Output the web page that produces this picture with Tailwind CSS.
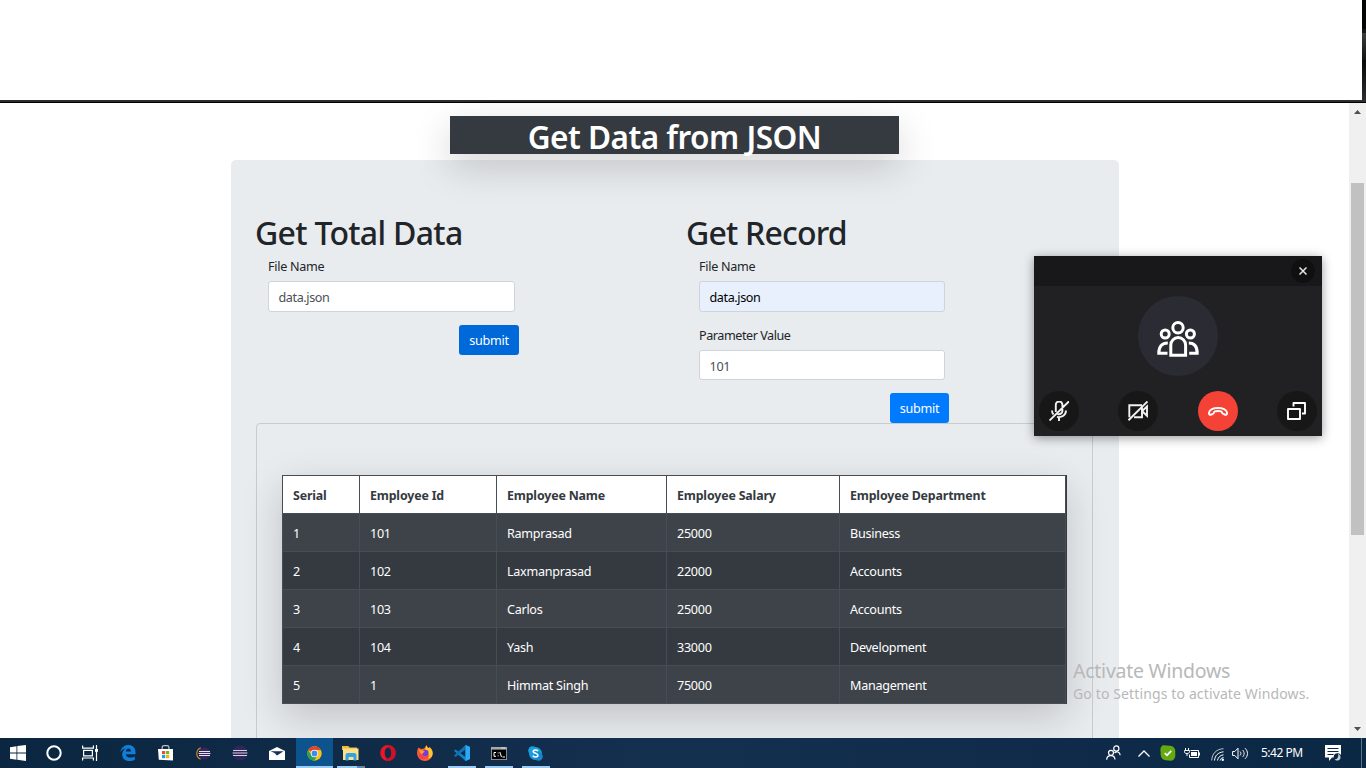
<!DOCTYPE html>
<html lang="en">
<head>
<meta charset="utf-8">
<title>Get Data from JSON</title>
<script src="https://cdn.jsdelivr.net/npm/@tailwindcss/browser@4"></script>
</head>
<body class="w-[1366px] h-[768px] overflow-hidden bg-white font-['Noto_Sans','Open_Sans',sans-serif] text-[12.6px] text-[#212529]">
<div class="relative w-[1366px] h-[768px] overflow-hidden flex flex-col">
  <!-- blank strip above the browser page -->
  <div class="flex h-[100px] shrink-0">
    <div class="flex-1 bg-white"></div>
    <div class="w-1 flex flex-col">
      <div class="h-[29px] bg-[#030404]"></div>
      <div class="h-1 bg-[#151616]"></div>
      <div class="h-[27px] bg-linear-to-b from-[#3c3e3e] to-[#121313]"></div>
      <div class="flex-1 bg-linear-to-b from-[#080909] to-[#2c2c2e]"></div>
    </div>
  </div>
  <div class="h-[3px] shrink-0 bg-[#2d2d2f] border-b border-black"></div>

  <div class="flex h-[635px] shrink-0">
    <main class="flex-1 h-[635px] overflow-hidden pt-[13px]">
      <h1 class="relative z-10 ml-[450px] w-[449px] h-[38px] bg-[#343a40] text-white text-center text-[31.5px] font-semibold leading-[41px] shadow-[0_13px_38px_rgba(0,0,0,0.175)]"><span class="inline-block tracking-[-0.5px] whitespace-nowrap">Get Data from JSON</span></h1>
      <section class="mt-1.5 ml-[231px] w-[888px] h-[620px] rounded-[5px] bg-[#e9ecef] px-[25px] pt-[51px]">
        <div class="flex h-[212px]">
          <div class="w-[431px]">
            <h2 class="-ml-px h-[44px] leading-[44px] text-[32px] font-medium whitespace-nowrap tracking-[-0.7px]">Get Total Data</h2>
            <div class="pl-3">
              <div class="h-[26px] pt-0.5 leading-[19px]"><span class="tracking-[-0.3px]">File Name</span></div>
              <div class="w-[247px] h-[31px] rounded-[3px] border border-[#ced4da] bg-white px-[9.5px] leading-[31px] text-[#495057]"><span class="tracking-[-0.4px]">data.json</span></div>
              <div class="mt-[13px] ml-[191px] w-[60px] h-[30px] rounded-[3px] bg-[#0069d9] text-white text-center leading-[31px] tracking-[-0.3px]">submit</div>
            </div>
          </div>
          <div class="flex-1">
            <h2 class="-ml-px h-[44px] leading-[44px] text-[32px] font-medium whitespace-nowrap tracking-[-0.8px]">Get Record</h2>
            <div class="pl-3">
              <div class="h-[26px] pt-0.5 leading-[19px]"><span class="tracking-[-0.3px]">File Name</span></div>
              <div class="w-[246px] h-[31px] rounded-[3px] border border-[#ced4da] bg-[#e8f0fe] px-[9.5px] leading-[31px] text-black"><span class="tracking-[-0.4px]">data.json</span></div>
              <div class="mt-[13px] h-[25px] pt-px leading-[19px] tracking-[-0.45px]">Parameter Value</div>
              <div class="w-[246px] h-[30px] rounded-[3px] border border-[#ced4da] bg-white px-[9.5px] leading-[31px] text-[#495057]"><span class="tracking-[-0.3px]">101</span></div>
              <div class="mt-[13px] ml-[191px] w-[59px] h-[30px] rounded-[3px] bg-[#007bff] text-white text-center leading-[32px] tracking-[-0.3px]">submit</div>
            </div>
          </div>
        </div>
        <div class="w-[837px] h-[400px] rounded-[4px] border border-[#c9cccf] pt-[51px] pl-[25px]">
          <div class="w-[785px] h-[229px] bg-[#343a40] shadow-[0_13px_38px_rgba(0,0,0,0.175)]">
            <table class="w-[784px] table-fixed border-collapse text-white tracking-[-0.28px]">
              <colgroup><col class="w-[77px]"><col class="w-[137px]"><col class="w-[170px]"><col class="w-[173px]"><col class="w-[226px]"></colgroup>
              <thead>
                <tr class="h-[38px] bg-white text-[#343a40] text-left font-bold text-[12.4px] tracking-[-0.16px]">
                  <th class="border border-[#454d55] px-2.5 py-0 pt-[3px] leading-[18px]">Serial</th><th class="border border-[#454d55] px-2.5 py-0 pt-[3px] leading-[18px]">Employee Id</th><th class="border border-[#454d55] px-2.5 py-0 pt-[3px] leading-[18px]">Employee Name</th><th class="border border-[#454d55] px-2.5 py-0 pt-[3px] leading-[18px]">Employee Salary</th><th class="border border-[#454d55] px-2.5 py-0 pt-[3px] leading-[18px]">Employee Department</th>
                </tr>
              </thead>
              <tbody class="[&_td]:border [&_td]:border-[#454d55] [&_td]:px-2.5 [&_td]:py-0 [&_td]:pt-[3px] [&_td]:leading-[18px]">
                <tr class="h-[38px] bg-[#3e4349]"><td>1</td><td>101</td><td>Ramprasad</td><td>25000</td><td>Business</td></tr>
                <tr class="h-[38px] bg-[#343a40]"><td>2</td><td>102</td><td>Laxmanprasad</td><td>22000</td><td>Accounts</td></tr>
                <tr class="h-[38px] bg-[#3e4349]"><td>3</td><td>103</td><td>Carlos</td><td>25000</td><td>Accounts</td></tr>
                <tr class="h-[38px] bg-[#343a40]"><td>4</td><td>104</td><td>Yash</td><td>33000</td><td>Development</td></tr>
                <tr class="h-[38px] bg-[#3e4349]"><td>5</td><td>1</td><td>Himmat Singh</td><td>75000</td><td>Management</td></tr>
              </tbody>
            </table>
          </div>
        </div>
      </section>
    </main>
    <!-- scrollbar -->
    <div class="w-[17px] bg-[#f0f0f0] flex flex-col items-center pt-[7px] pb-[7px]">
      <svg class="w-[7px] h-[4px] shrink-0" viewBox="0 0 7 4"><path d="M3.5 0 7 4H0z" fill="#505050"/></svg>
      <div class="mt-[69px] w-[13px] h-[352px] bg-[#c1c1c1]"></div>
      <svg class="mt-auto w-[7px] h-[4px] shrink-0" viewBox="0 0 7 4"><path d="M3.5 4 7 0H0z" fill="#505050"/></svg>
    </div>
  </div>

  <!-- taskbar -->
  <footer class="h-[30px] shrink-0 bg-linear-to-r from-[#0a2640] via-[#14304f] to-[#0a2744] flex text-white">
    <div class="flex w-[555px] [&>div]:w-[37px] [&>div]:h-[30px] [&>div]:flex [&>div]:items-center [&>div]:justify-center [&>div]:shrink-0">
      <div class="pr-0.5"><svg class="w-4 h-4" viewBox="0 0 16 16" fill="#fff"><path d="M0 2.2 6.5 1.200V7.500H0zM7.300 1.100 16 0v7.500H7.300zM0 8.400h6.500v6.300L0 13.800zM7.300 8.400H16V16l-8.700-1.200z"/></svg></div>
      <div class="pr-1"><svg class="w-4 h-4" viewBox="0 0 16 16" fill="none" stroke="#fff" stroke-width="2"><circle cx="8" cy="8" r="6.700"/></svg></div>
      <div class="pr-1"><svg class="w-[17px] h-4" viewBox="0 0 17 16" fill="none" stroke="#fff" stroke-width="1.200"><path d="M.6.500v2.600h10.800V.5M.6 15.500V13h10.800v2.500M1.600 5.300h8.800v5.500H1.600zM14.500 0v16"/><path d="M13 4h3v2.800h-3z" fill="#fff" stroke="none"/></svg></div>
      <div class="pr-1"><svg class="w-4 h-4" viewBox="0 0 16 16"><path d="M.3 7.300C1 2.600 4.500 0 8.500 0c4.400 0 7 3 7 7.200v2H5.700c.2 2.300 2.200 3.400 4.500 3.400 1.700 0 3.200-.4 4.600-1.200v3.300c-1.500.8-3.300 1.300-5.400 1.300-4.500 0-7.200-2.700-7.200-6.500 0-2.900 1.500-5.200 4-6.300C3.600 3.600 1.500 5 .3 7.300zm5.500-.8h5.100c0-1.900-.9-3-2.500-3S6 4.800 5.800 6.500z" fill="#0f7fdc"/></svg></div>
      <div class="pr-[3px]"><svg class="w-[15px] h-4" viewBox="0 0 15 16"><path d="M4.200 4V2.300C4.200.8 5.200.6 6 .6h3c1 0 1.900.3 1.900 1.700V4" fill="none" stroke="#b9c3cc" stroke-width="1.200"/><path d="M0 4h15v11.500L.8 14.800z" fill="#fff"/><path d="M4 6h3.200v3.200H4z" fill="#e8502c"/><path d="M8 6h3.200v3.200H8z" fill="#7ab51d"/><path d="M4 10h3.200v3.200H4z" fill="#189fe4"/><path d="M8 10h3.200v3.200H8z" fill="#f5b50d"/></svg></div>
      <div><svg class="w-[15px] h-[13px]" viewBox="0 0 15 13"><circle cx="8.500" cy="6.500" r="6" fill="#33275c"/><path d="M4.800.8C-.5 3-.5 10 4.600 12.200" fill="none" stroke="#e88a20" stroke-width="1.100"/><path d="M3 4.500h11M2.700 6.500h11.700M3 8.500h11" stroke="#e8e3f2" stroke-width="1.200"/></svg></div>
      <div class="pr-0.5"><svg class="w-4 h-4" viewBox="0 0 16 16"><circle cx="8" cy="8" r="7.500" fill="#31265a"/><path d="M1 5.500h14M.6 8h14.800M1 10.500h14" stroke="#d6d0e4" stroke-width="1.100"/></svg></div>
      <div class="pr-0.5"><svg class="w-4 h-[13px]" viewBox="0 0 16 13"><path d="M0 4 8 0l8 4v9H0z" fill="#fff"/><path d="M1.500 4.200h13L8 8.500 5.500 6.200 8 7z" fill="#12304e"/></svg></div>
      <div class="relative bg-[#0d548f]"><svg class="w-[15px] h-[15px]" viewBox="0 0 15 15"><circle cx="7.500" cy="7.500" r="7.200" fill="#fbc116"/><path d="M7.500 7.500 1.200 3.900A7.300 7.300 0 0 1 13.800 4H7.500z" fill="#e5432f"/><path d="M1.200 3.900A7.300 7.300 0 0 0 7.100 14.800l3.500-5.500L7.500 7.500 4.400 9.300z" fill="#2da04d"/><circle cx="7.500" cy="7.500" r="3.700" fill="#fff"/><circle cx="7.500" cy="7.500" r="2.900" fill="#4387f0"/></svg><i class="absolute left-0 bottom-0 w-full h-0.5 bg-[#9ccbf3]"></i></div>
      <div class="relative pr-0.5"><svg class="w-[17px] h-[15px]" viewBox="0 0 17 15"><path d="M0 0h6.500l1 1.500H15V4H0z" fill="#f0b93a"/><path d="M1 2.500h15.500V14H1z" fill="#ffe08a"/><path d="M3.500 14.500V8.600L5 7h8l1.500 1.600v5.900h-3V11H6.600v3.500z" fill="#2fa4e4"/></svg><i class="absolute left-1 bottom-0 w-[20px] h-0.5 bg-[#9ccbf3]"></i><i class="absolute left-6 bottom-0 w-[8px] h-0.5 bg-[#6688a5]"></i></div>
      <div class="pr-0.5"><svg class="w-4 h-4" viewBox="0 0 16 16"><path fill-rule="evenodd" d="M8 0a7.800 8 0 1 0 0 16A7.800 8 0 1 0 8 0zm0 2.600c2 0 3.300 2.400 3.300 5.400S10 13.400 8 13.400 4.700 11 4.700 8 6 2.600 8 2.600z" fill="#ed1629"/><path fill-rule="evenodd" d="M8 0c4.800 0 7.800 3.800 7.800 8S13 16 8 16c-1.500 0-2.500-1-2.500-3.500.7.600 1.600.9 2.500.9 2 0 3.300-2.400 3.300-5.400S10 2.600 8 2.600z" fill="#b80f22" opacity=".55"/></svg></div>
      <div class="pr-0.5"><svg class="w-4 h-4" viewBox="0 0 16 16"><path d="M1.500 2.500 4 4 7 3.500 9.500 0c.3 2 1.500 2.500 2.500 3.500L12.500 2C15 4 16 6.500 15.700 9c-.5 4-3.700 7-7.700 7S.3 13 .1 8.500C0 6.500.500 4 1.500 2.500z" fill="#fb642f"/><path d="M9.500 0c.3 2 1.500 2.500 2.500 3.500L12.500 2c3 3 4 6 2.300 9.500-2 2.500-4 1.500-4 1.500 2-4-.5-6-2.800-7.500z" fill="#ffc72d"/><circle cx="8.300" cy="8" r="3.300" fill="#7540cf"/><path d="M1.500 5C4 4.500 6 5 8 7c-2 0-1.500 2.300-4 2.500 2.500 3 6 2.500 8.500.5-1 4-7.500 6-10.500 2z" fill="#fd3d56"/><path d="M1.500 5C4 4.500 6 5 8 7c-2 0-1.800 2-4 2.200z" fill="#ff9b27"/></svg></div>
      <div class="relative pr-0.5"><svg class="w-4 h-4" viewBox="0 0 16 16"><path d="m11.500 0 4.500 2v12l-4.500 2L0 5.800 1.500 4.500l10 7.500z" fill="#0b84d0"/><path d="M11.500 0v4.500L1.500 12 0 10.600z" fill="#1471ae"/><path d="M11.500 0 16 2v12l-4.500 2z" fill="#2ba9f1"/></svg><i class="absolute left-1 bottom-0 w-[28px] h-0.5 bg-[#9ccbf3]"></i></div>
      <div class="relative pr-0.5"><svg class="w-4 h-[13px]" viewBox="0 0 16 13"><path d="M0 0h16v13H0z" fill="#a6aaae"/><path d="M.8 2.600h14.400v9.600H.8z" fill="#000"/><path d="M5 5.500H3v3.800h2M6.700 6h.9M6.700 8.800h.9M8.800 5l1.700 5M11.500 10h2.500" fill="none" stroke="#fff" stroke-width="1"/><path d="M10.500 1h1.200M12.500 1h1.200" stroke="#fff"/></svg><i class="absolute left-1 bottom-0 w-[28px] h-0.5 bg-[#9ccbf3]"></i></div>
      <div class="relative pr-0.5"><svg class="w-[15px] h-[15px]" viewBox="0 0 15 15"><circle cx="7.500" cy="7.500" r="6.500" fill="#199edf"/><circle cx="4.500" cy="4.500" r="4.300" fill="#199edf"/><circle cx="10.500" cy="10.500" r="4.300" fill="#1686ce"/><path d="M9.900 5C9 3.700 5.200 3.500 5.200 5.600c0 2.200 4.700 1.300 4.700 3.700 0 2.200-4 2.200-5 .4" fill="none" stroke="#fff" stroke-width="1.600"/></svg><i class="absolute left-1 bottom-0 w-[28px] h-0.5 bg-[#9ccbf3]"></i></div>
    </div>
    <div class="ml-[551px] flex items-center">
      <svg class="w-[15px] h-4" viewBox="0 0 15 16" fill="none" stroke="#fff" stroke-width="1.200"><circle cx="5" cy="7.800" r="2.500"/><circle cx="10.300" cy="3.500" r="2.600"/><path d="M.7 14.800C.7 9.200 8.600 9.200 9 14.500M8.500 8c2-2.200 5.400-1.300 5.700 2.200"/></svg>
      <svg class="ml-[17px] w-3 h-[7px]" viewBox="0 0 12 7" fill="none" stroke="#fff" stroke-width="1.300"><path d="m.5 6.500 5.500-5.500 5.500 5.500"/></svg>
      <svg class="ml-[10px] w-4 h-4" viewBox="0 0 16 16"><path d="M3.500.3 10 .8c4 .4 6 3.700 5.200 7.700.8 3.500-1 7-4.200 7.200l-5-.4C2 14.800 0 11.500.7 7.500 0 4 .5 1 3.500.3z" fill="#65a912"/><path d="m4.700 8 2.300 2.300 4.200-4.500" fill="none" stroke="#fff" stroke-width="1.700"/></svg>
      <svg class="ml-2 w-4 h-[11px]" viewBox="0 0 16 11" fill="none" stroke="#fff"><path d="M1.500 0v2M4.500 0v2M.5 2.500h5v1.200C5.500 5 4.500 5.500 3 5.500S.5 5 .5 3.700zM3 5.500V8"/><path d="M6.500 2.500h8v7h-9V6.500M15.500 4.500v3"/><path d="M7 4h6v4H7z" fill="#fff" stroke="none"/></svg>
      <svg class="ml-[11px] w-[13px] h-[13px] mt-0.5" viewBox="0 0 13 13" fill="none" stroke="#fff"><path d="M.7 12.500C1 5.500 5.500 1 12.500.7" opacity=".7"/><path d="M3.500 12.500C4 7.500 7 4.500 12.500 3.800M6.500 12.500C7 9.500 9 7.300 12.500 6.800" /><path d="M9.200 12.500c.3-1.700 1.500-2.700 3.300-3" /><circle cx="11.800" cy="11.800" r="1.200" fill="#fff" stroke="none"/></svg>
      <svg class="ml-2 w-[17px] h-[13px]" viewBox="0 0 17 13" fill="none" stroke="#fff"><path d="M.6 4.500v4h2.200L6 11.800V1.200L2.800 4.500zM8 4.500c1.200 1.200 1.200 2.800 0 4M10.500 3c2.200 2 2.200 5 0 7M13 1.200c3.300 3 3.300 7.600 0 10.600"/></svg>
      <span class="ml-3 w-[43px] text-[12px] tracking-[-0.5px] whitespace-nowrap">5:42 PM</span>
      <svg class="ml-[21px] w-[17px] h-[17px]" viewBox="0 0 17 17"><path d="M0 0h16v12.500H7L4 16v-3.500H0z" fill="#fff"/><path d="M2.500 3.500h11M2.500 6.500h11M2.500 9.500h6" stroke="#0b2844" stroke-width="1.200"/><circle cx="12.500" cy="12" r="3.800" fill="#0b2844"/><path d="M13 8.800c2.200 1 3.300 3.500 2 5.500-1.500 1.800-4.300 1.700-5.500 0 2.500.3 4.500-2 3.500-5.500z" fill="#c7d0d8"/></svg>
    </div>
    <div class="ml-auto mr-1 w-px bg-[#5d7286]"></div>
  </footer>

  <!-- activation watermark -->
  <div class="absolute left-[1073px] top-[659px] text-[#b7b8b9] whitespace-nowrap">
    <div class="h-[25px] leading-[24px] text-[19.500px] tracking-[-0.25px]">Activate Windows</div>
    <div class="h-5 leading-[20px] text-[14px] tracking-[0.130px]">Go to Settings to activate Windows.</div>
  </div>

  <!-- floating call window -->
  <div class="absolute left-[1034px] top-[256px] z-20 w-[288px] h-[180px] bg-[#212123] shadow-[0_2px_10px_rgba(0,0,0,0.4)] flex flex-col">
    <div class="h-[30px] bg-[#18181a] flex justify-end items-center pr-[7px]">
      <div class="w-6 h-6 rounded-full bg-[#101011] flex items-center justify-center"><svg class="w-2 h-2" viewBox="0 0 8 8" stroke="#e6e6e6" stroke-width="1.500"><path d="m.5.500 7 7M7.500.500l-7 7"/></svg></div>
    </div>
    <div class="mt-[10px] mx-auto w-20 h-20 rounded-full bg-[#2b2b33] flex justify-center pt-[24.500px]">
      <svg class="w-[42px] h-9" viewBox="0 0 42 36" fill="none" stroke="#fff" stroke-width="3"><circle cx="21" cy="6.700" r="5.200"/><circle cx="8.200" cy="13" r="4"/><circle cx="33.400" cy="13" r="4"/><path d="M13.800 34.200V24a7.400 7.400 0 0 1 14.800 0v10.200zM10.800 22C5 22 1.800 25.500 1.800 32.300h8.700M31.800 22c5.200 0 8.400 3.500 8.400 10.300h-8"/></svg>
    </div>
    <div class="mt-[15px] flex justify-between px-[5px] [&>div]:w-10 [&>div]:h-10 [&>div]:rounded-full [&>div]:flex [&>div]:items-center [&>div]:justify-center">
      <div class="bg-[#171718]"><svg class="w-5 h-5" viewBox="0 0 20 20" fill="none" stroke="#f2f2f2" stroke-width="1.900"><path d="M6.800 11V3.800a3.300 3.300 0 0 1 6.600 0v6a3.300 3.300 0 0 1-4.800 3M3 9.500c0 1.600.5 3 1.500 4M8 15.800c5 1.200 9-1.800 9-6.300M10 16v4M20 .3.500 19.500"/></svg></div>
      <div class="bg-[#171718]"><svg class="w-5 h-5" viewBox="0 0 20 20" fill="none" stroke="#f2f2f2" stroke-width="1.900"><path d="M14 4.200H1.300v12.100M6 16.300h8V6.500M14.500 9.800l4.500-4.300v9.300l-4.500-4.300M19.500.5.5 19.200"/></svg></div>
      <div class="bg-[#f44336]"><svg class="w-5 h-[9px]" viewBox="0 0 20 9" fill="none" stroke="#fff" stroke-width="1.900" stroke-linejoin="round"><path d="M1 5.800C1.500-.6 18.500-.6 19 5.800c.2 2.200-1 2.200-2.500 1.700-1.800-.5-2.500-.8-2.800-2.700-.1-1-7.300-1-7.400 0-.3 1.900-1 2.200-2.800 2.700C2 8 .8 8 1 5.800z"/></svg></div>
      <div class="bg-[#171718]"><svg class="w-[19px] h-[18px]" viewBox="0 0 19 18" fill="none" stroke="#fff" stroke-width="1.900" stroke-linejoin="round"><path d="M1 7h12v10H1zM6.500 4.500V1H18v10.500h-3"/></svg></div>
    </div>
  </div>
</div>
</body>
</html>
